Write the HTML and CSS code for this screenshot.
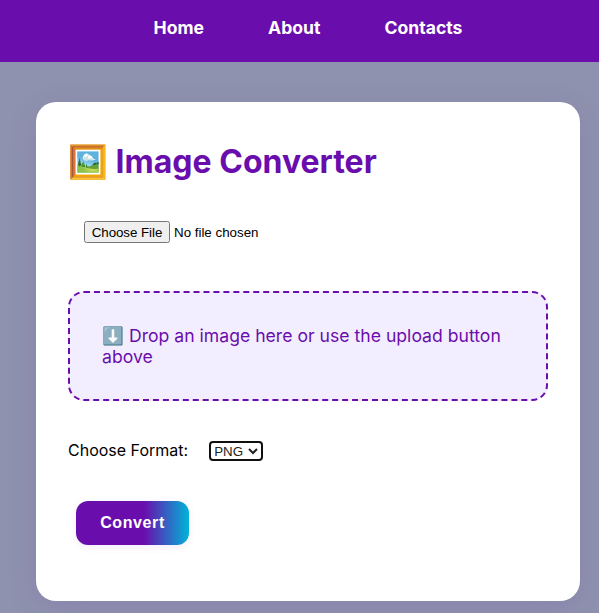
FILE: index.html
```html
<!DOCTYPE html>
<html lang="en">
<head>
<meta charset="utf-8">
<title>Image Converter</title>
<link rel="stylesheet" href="styles.css">
</head>
<body>
<nav class="nav"><a href="#">Home</a><a href="#">About</a><a href="#">Contacts</a></nav>
<main class="card">
<h1>🖼️ Image Converter</h1>
<input class="file" type="file">
<div class="drop">⬇️ Drop an image here or use the upload button above</div>
<div class="format"><label for="fmt">Choose Format:</label><select id="fmt"><option>PNG</option><option>JPEG</option></select></div>
<button class="convert">Convert</button>
</main>
</body>
</html>
```
FILE: styles.css
```css
* { box-sizing: border-box; }
html { background: #8e92ae; }
body { margin: 0; height: 613px; overflow: hidden; background: #8e92ae; font-family: Inter, sans-serif; font-size: 16px; }
.nav { position: relative; z-index: 1; height: 62px; padding: 17px 0 0 17px; display: flex; justify-content: center; gap: 64px; background: #6a0dad; }
.nav a { color: #fff; font-weight: 700; font-size: 17.6px; text-decoration: none; }
.card { width: 544px; height: 499px; margin: 40px 0 0 36px; padding: 32px; background: #fff; border-radius: 20px; box-shadow: 0 8px 32px rgba(106,13,173,.1); }
h1 { margin: 8px 0 0; font-size: 32px; line-height: 39px; font-weight: 700; color: #6a0dad; }
.file { display: block; height: 22px; margin: 40px 0 0 16px; font-family: "Liberation Sans", sans-serif; font-size: 13.333px; }
.file::file-selector-button { width: 86px; height: 22px; padding: 0; font-size: 13.333px; letter-spacing: -.05px; }
.drop { margin-top: 48px; height: 110px; padding: 32px; border: 2px dashed #6a0dad; border-radius: 16px; background: #f2eeff; color: #6a0dad; font-size: 17.6px; line-height: 21px; letter-spacing: .01px; }
.format { display: flex; align-items: center; margin-top: 40px; height: 20px; }
.format label { margin-bottom: 2px; }
.format select { width: 54px; height: 20px; margin-left: 21px; padding: 0; border: 2px solid #101010; border-radius: 4px; background: #fff; color: #222; font: 13.333px "Liberation Sans", sans-serif; text-indent: -1px; }
.convert { display: block; width: 113px; height: 44px; margin: 40px 0 0 8px; padding: 0; border: 0; border-radius: 12px; background: linear-gradient(90deg,#6a0dad 60%,#00b4d8); color: #fff; font: 700 16px "Liberation Sans", sans-serif; letter-spacing: .6px; box-shadow: 0 2px 8px rgba(106,13,173,.08); }
```
